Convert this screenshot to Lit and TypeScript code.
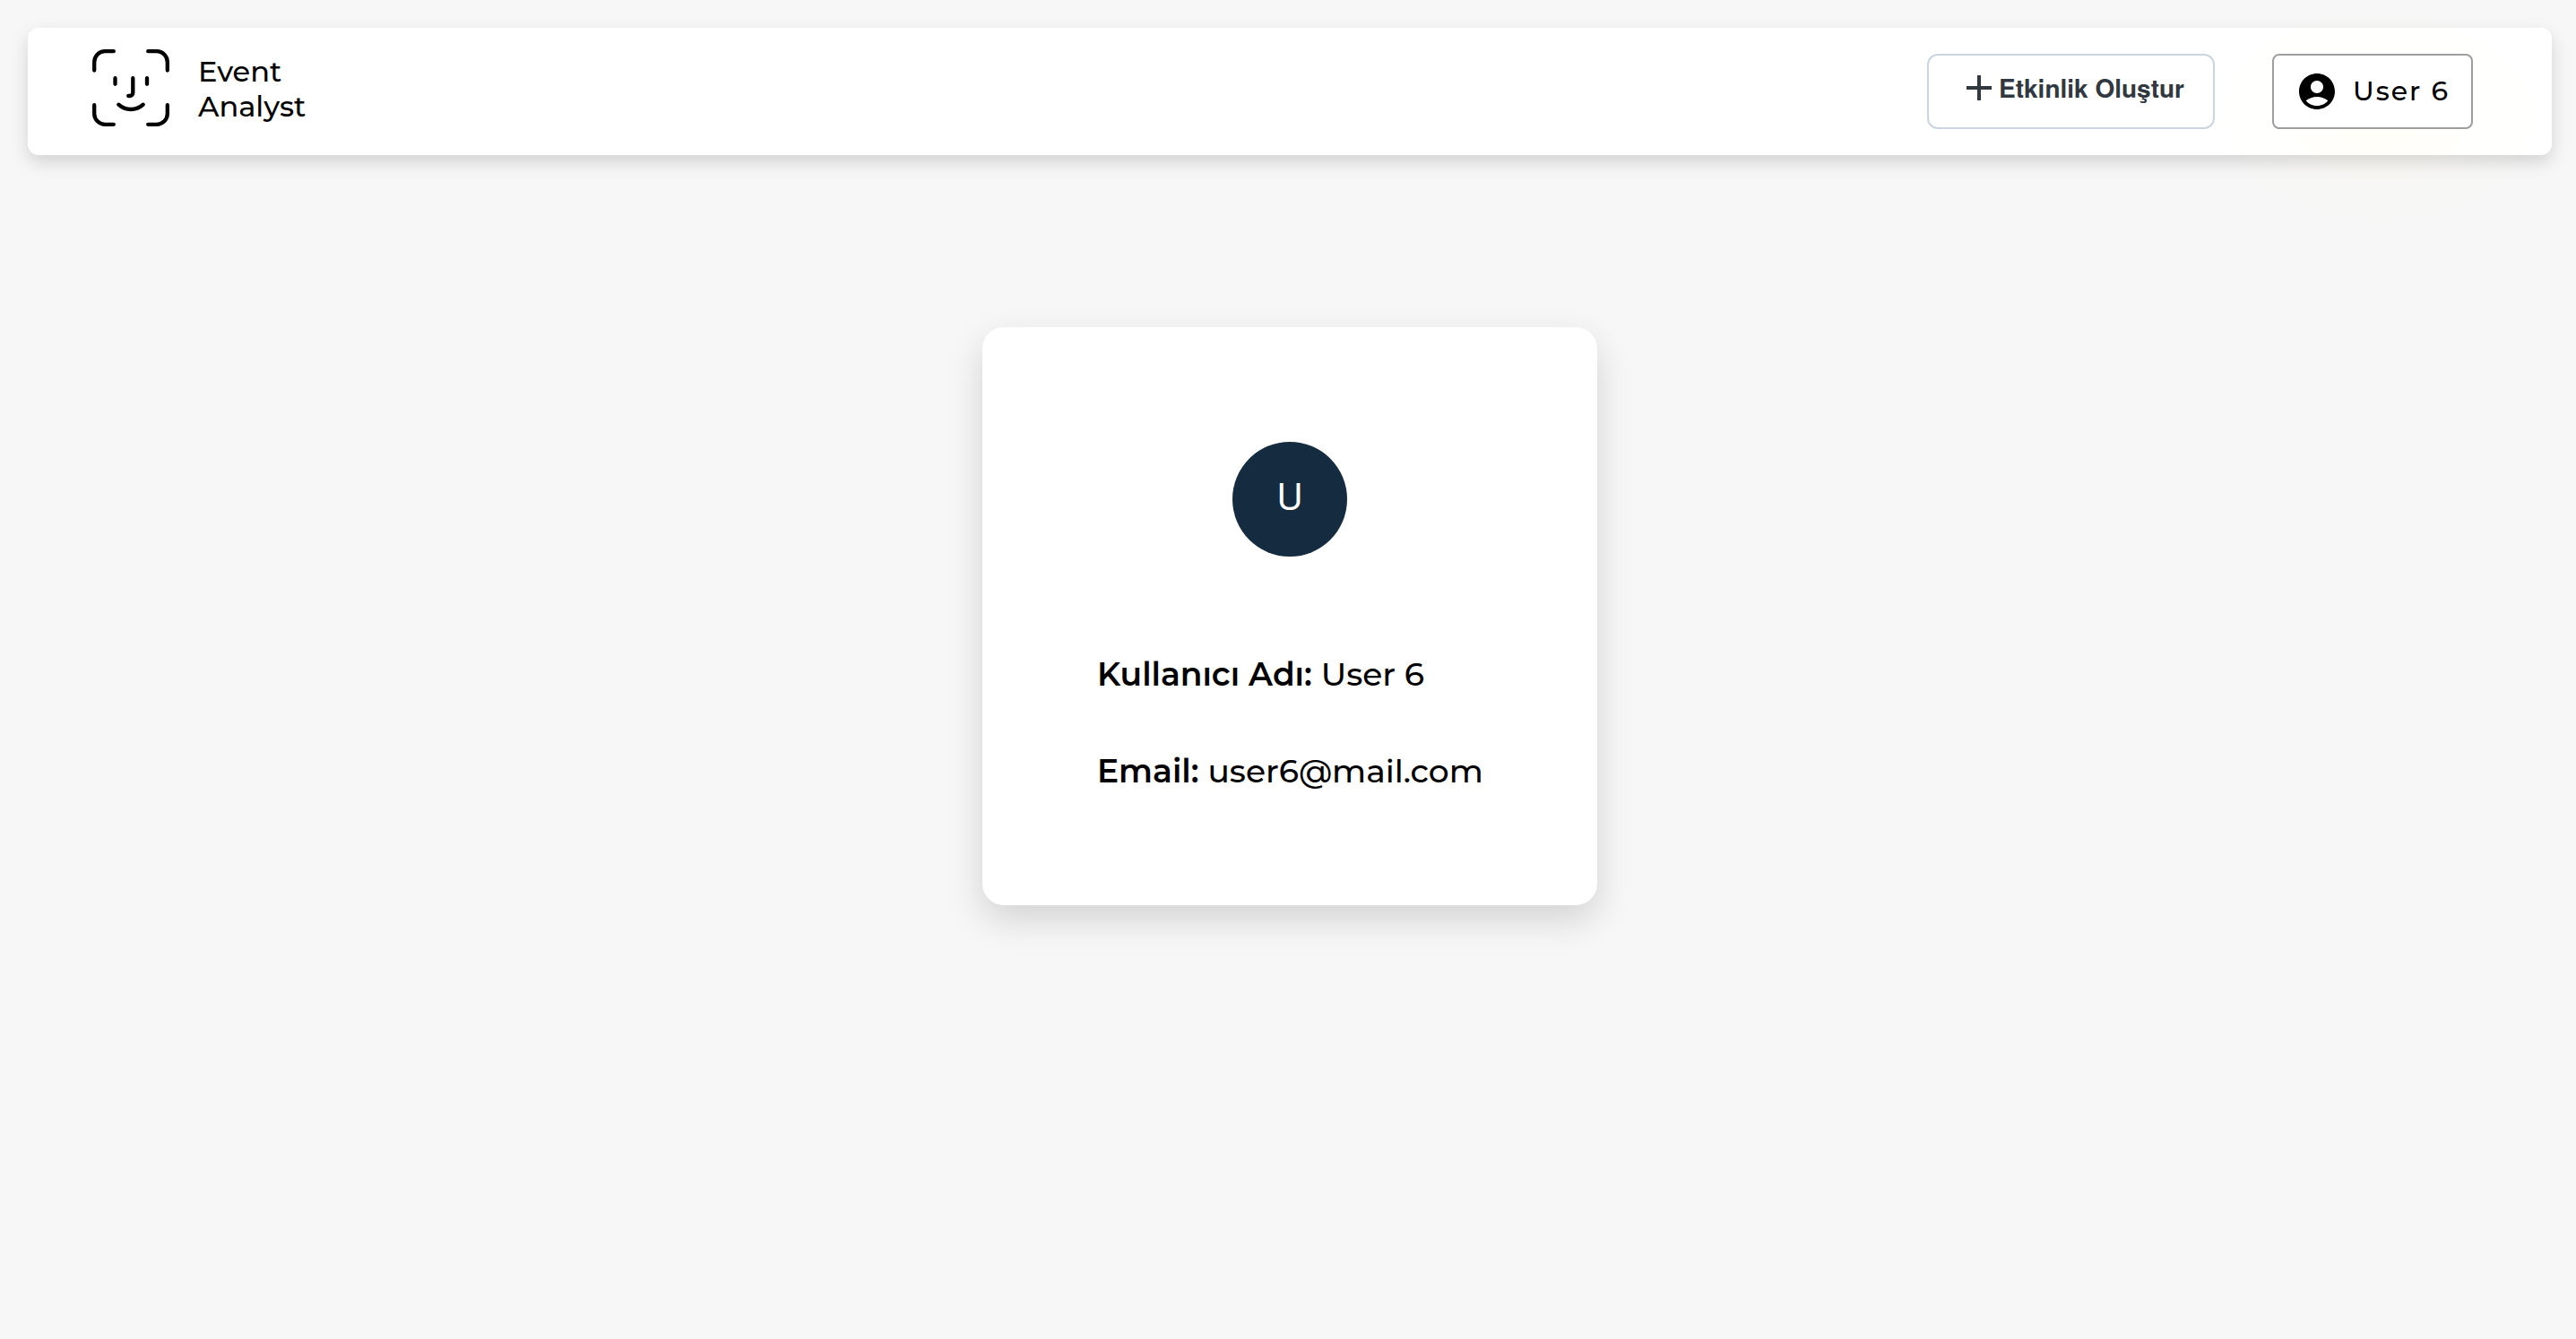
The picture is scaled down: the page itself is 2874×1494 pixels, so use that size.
import { LitElement, html, css } from "lit";
import { customElement, property } from "lit/decorators.js";

@customElement("app-header")
export class AppHeader extends LitElement {
  @property() userName = "";

  static styles = css`
    :host {
      display: block;
      position: relative;
    }
    .bar {
      box-sizing: border-box;
      display: flex;
      align-items: flex-start;
      justify-content: space-between;
      min-height: 142px;
      padding: 24px 88px 28px 72px;
      border-radius: 12px;
      background: #fff;
      box-shadow: 0 8px 20px rgba(0, 0, 0, 0.15);
    }
    .glow {
      position: absolute;
      right: 14px;
      top: -20px;
      width: 360px;
      height: 240px;
      pointer-events: none;
      background: radial-gradient(closest-side, rgba(255, 246, 205, 0.16), rgba(255, 246, 205, 0));
    }
    .brand {
      display: flex;
      align-items: center;
      gap: 32px;
      color: #000;
      text-decoration: none;
      font-size: 32px;
      font-weight: 500;
      line-height: 39px;
    }
    .logo {
      display: block;
      width: 86px;
      height: 86px;
    }
    .name {
      display: flex;
      flex-direction: column;
      padding-top: 2px;
    }
    .actions {
      position: relative;
      z-index: 1;
      display: flex;
      gap: 64px;
      padding-top: 5px;
    }
    button {
      box-sizing: border-box;
      display: flex;
      align-items: center;
      height: 84px;
      margin: 0;
      background: #fff;
      cursor: pointer;
    }
    .create {
      gap: 6px;
      padding: 0 32px 8px 40px;
      border: 2px solid #cbd5e1;
      border-radius: 12px;
      color: #313840;
      font: bold 28px/32px "TeX Gyre Heros", FreeSans, "Liberation Sans", Arial, sans-serif;
    }
    .plus {
      width: 32px;
      height: 32px;
    }
    .user {
      gap: 16px;
      padding: 0 24px;
      border: 2px solid #9e9e9e;
      border-radius: 8px;
      color: #000;
      font: 500 30px/36px Montserrat, Inter, sans-serif;
      letter-spacing: 2px;
    }
    .account {
      width: 48px;
      height: 48px;
    }
  `;

  render() {
    return html`
      <header class="bar">
        <a class="brand" href="#">
          <svg class="logo" viewBox="0 0 86 86" fill="none" stroke="#000" stroke-width="4.3" stroke-linecap="round" stroke-linejoin="round" aria-hidden="true">
            <path d="M2.2 23.5V14.2a12 12 0 0 1 12-12H23.8M62.2 2.2h9.6a12 12 0 0 1 12 12v9.3M83.8 62.2v9.6a12 12 0 0 1-12 12h-9.6M23.8 83.8h-9.6a12 12 0 0 1-12-12v-9.6" />
            <path d="M25.5 32.2v6.6M61 32.2v6.6M45.3 32.2v16.3a3.5 3.5 0 0 1-3.5 3.5h-1.6M29.3 61.7a20.3 20.3 0 0 0 27.4 0" />
          </svg>
          <span class="name"><span>Event</span><span>Analyst</span></span>
        </a>
        <nav class="actions">
          <button class="create" type="button">
            <svg class="plus" viewBox="0 0 32 32" stroke="currentColor" stroke-width="4" aria-hidden="true">
              <path d="M2 16h28M16 2v28" />
            </svg>
            <span>Etkinlik Oluştur</span>
          </button>
          <button class="user" type="button">
            <svg class="account" viewBox="0 0 24 24" fill="currentColor" aria-hidden="true">
              <path d="M12 2C6.48 2 2 6.48 2 12s4.48 10 10 10 10-4.48 10-10S17.52 2 12 2zm0 4c1.93 0 3.5 1.57 3.5 3.5S13.93 13 12 13s-3.5-1.57-3.5-3.5S10.07 6 12 6zm0 14c-2.03 0-4.43-.82-6.14-2.88C7.55 15.8 9.68 15 12 15s4.45.8 6.14 2.12C16.43 19.18 14.03 20 12 20z" />
            </svg>
            <span>${this.userName}</span>
          </button>
        </nav>
      </header>
      <div class="glow"></div>
    `;
  }
}

@customElement("profile-card")
export class ProfileCard extends LitElement {
  @property() userName = "";
  @property() email = "";

  static styles = css`
    :host {
      box-sizing: border-box;
      display: flex;
      flex-direction: column;
      align-items: center;
      gap: 109px;
      width: 686px;
      max-width: 100%;
      padding: 128px;
      border-radius: 24px;
      background: #fff;
      box-shadow: 0 16px 40px rgba(0, 0, 0, 0.15);
    }
    .avatar {
      box-sizing: border-box;
      display: flex;
      align-items: center;
      justify-content: center;
      width: 128px;
      height: 128px;
      padding-bottom: 13px;
      border-radius: 50%;
      background: #152c40;
      color: #fff;
      font: 400 40px/44px "TeX Gyre Heros", FreeSans, "Liberation Sans", Arial, sans-serif;
    }
    .details {
      display: flex;
      flex-direction: column;
      align-self: stretch;
      gap: 64px;
      margin: 0;
      font-size: 36px;
      font-weight: 500;
      line-height: 44px;
      white-space: nowrap;
    }
    .row {
      display: flex;
      gap: 10px;
    }
    dt {
      font-weight: 600;
    }
    dd {
      margin: 0;
    }
  `;

  render() {
    return html`
      <div class="avatar">${this.userName.charAt(0)}</div>
      <dl class="details">
        <div class="row"><dt>Kullanıcı Adı:</dt><dd>${this.userName}</dd></div>
        <div class="row"><dt>Email:</dt><dd>${this.email}</dd></div>
      </dl>
    `;
  }
}

@customElement("app-root")
export class AppRoot extends LitElement {
  static styles = css`
    :host {
      box-sizing: border-box;
      display: flex;
      flex-direction: column;
      gap: 192px;
      min-height: 100vh;
      padding: 31px 27px 31px 31px;
      background: #f7f7f7;
      color: #000;
      font-family: Montserrat, Inter, sans-serif;
    }
    .content {
      display: flex;
      justify-content: center;
    }
  `;

  render() {
    return html`
      <app-header userName="User 6"></app-header>
      <main class="content">
        <profile-card userName="User 6" email="user6@mail.com"></profile-card>
      </main>
    `;
  }
}
